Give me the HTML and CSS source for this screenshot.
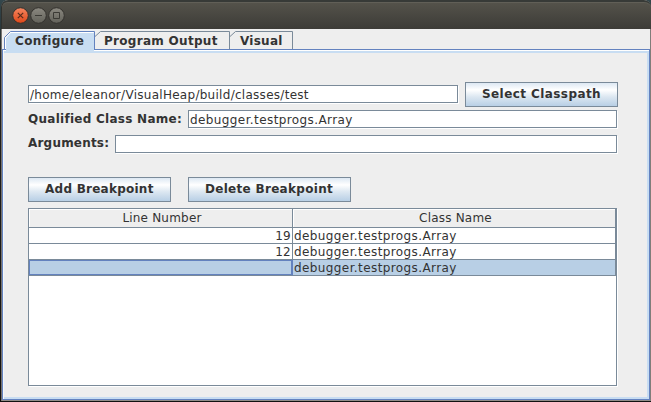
FILE: index.html
```html
<!DOCTYPE html>
<html lang="en">
<head>
<meta charset="utf-8">
<title>VisualHeap</title>
<link rel="stylesheet" href="styles.css">
</head>
<body>
<div class="window">
  <header class="titlebar">
    <svg class="controls" width="60" height="20" viewBox="0 0 60 20">
      <defs>
        <linearGradient id="close" x2="0" y2="1"><stop stop-color="#f58660"/><stop offset="1" stop-color="#df4718"/></linearGradient>
        <linearGradient id="gray" x2="0" y2="1"><stop stop-color="#8b8980"/><stop offset="1" stop-color="#62615a"/></linearGradient>
      </defs>
      <g stroke="#33312d" stroke-width="1">
        <circle cx="10.5" cy="10.5" r="7.8" fill="url(#close)"/>
        <circle cx="28.5" cy="10.5" r="7.8" fill="url(#gray)"/>
        <circle cx="46.5" cy="10.5" r="7.8" fill="url(#gray)"/>
      </g>
      <g fill="none" stroke="#5a2c1c" stroke-width="1.2">
        <path d="M7.800 7.800l5.400 5.400M13.200 7.800l-5.400 5.400"/>
        <path d="M25 10.500h7M43.500 7.500h6v6h-6z" stroke="#3b3a35" stroke-width="1"/>
      </g>
    </svg>
  </header>
  <nav class="tabs">
    <div class="tab selected">
      <svg width="91" height="22"><path class="fill" d="M2 20V6L7 2h83v18z"/><path class="edge" d="M.5 18V6.500L6.500.5h84v18"/><path class="shine" d="M1.500 18V7l5-5.500h83"/></svg>
      <span class="label configure">Configure</span>
    </div>
    <div class="tab output">
      <svg width="135" height="18"><path class="edge" d="M0 5.500L5.500.5h129V18"/></svg>
      <span class="label program">Program Output</span>
    </div>
    <div class="tab visual">
      <svg width="63" height="18"><path class="edge" d="M0 5.500L5.500.5h57V18"/></svg>
      <span class="label vis">Visual</span>
    </div>
  </nav>
  <main class="pane">
    <div class="row path-row">
      <div class="field path"><span class="path-text">/home/eleanor/VisualHeap/build/classes/test</span></div>
      <div class="button select"><span class="select-text">Select Classpath</span></div>
    </div>
    <div class="row class-row">
      <span class="caption qualified">Qualified Class Name:</span>
      <div class="field"><span class="class-text">debugger.testprogs.Array</span></div>
    </div>
    <div class="row args-row">
      <span class="caption arguments">Arguments:</span>
      <div class="field"></div>
    </div>
    <div class="row buttons">
      <div class="button add"><span class="add-text">Add Breakpoint</span></div>
      <div class="button delete"><span class="delete-text">Delete Breakpoint</span></div>
    </div>
    <div class="table">
      <div class="record head"><div class="cell"><span class="head-text">Line Number</span></div><div class="cell"><span class="head-text">Class Name</span></div></div>
      <div class="record"><div class="cell number">19</div><div class="cell"><span class="class-text">debugger.testprogs.Array</span></div></div>
      <div class="record"><div class="cell number">12</div><div class="cell"><span class="class-text">debugger.testprogs.Array</span></div></div>
      <div class="record active"><div class="cell number focus"></div><div class="cell"><span class="class-text">debugger.testprogs.Array</span></div></div>
    </div>
  </main>
</div>
</body>
</html>
```
FILE: styles.css
```css
* { box-sizing: border-box; }
body {
  margin: 0;
  width: 651px;
  height: 402px;
  overflow: hidden;
  background: linear-gradient(#34474c, #29363a 30px, #222 60px, #111);
  font: 12px/15px "DejaVu Sans", sans-serif;
  color: #333;
}
.window {
  width: 650px;
  height: 401px;
  margin-left: 1px;
  border-right: 1px solid #807d7a;
  border-bottom: 1px solid #918d89;
  border-left: 1px solid #77736f;
  border-radius: 7px 7px 0 0;
  background: #eee;
}
.titlebar {
  height: 29px;
  margin: 0 -1px;
  padding: 5px 0 0 9px;
  border-top: 2px solid #373a37;
  border-left: 1px solid #30312e;
  border-radius: 7px 7px 0 0;
  background: linear-gradient(#55534b, #3c3b37);
  box-shadow: inset 0 1px #615f57;
}
.controls { display: block; margin: -2px 0 0 -1px; }
.tabs {
  display: flex;
  height: 20px;
  padding: 2px 0 0 2px;
}
.tab { position: relative; height: 18px; }
.tab svg { display: block; overflow: visible; }
.selected { width: 91px; z-index: 1; }
.output { width: 135px; }
.visual { width: 63px; }
.edge { fill: none; stroke: #7a8a99; }
.selected .edge { stroke: #6382bf; }
.shine { fill: none; stroke: #fff; }
.fill { fill: #c8ddf2; }
.label {
  position: absolute;
  top: 3px;
  font-weight: bold;
  white-space: nowrap;
}
.configure { left: 11px; letter-spacing: .35px; }
.program { left: 9px; letter-spacing: .29px; }
.vis { left: 10px; letter-spacing: .25px; }
.pane {
  height: 351px;
  padding: 32px 29px 0 23px;
  border: 1px solid #6382bf;
  box-shadow: inset 0 1px #fff, inset 1px 0 #f4f8fc, inset -2px -2px #c8ddf2, inset 0 3px #c8ddf2;
}
.row { display: flex; align-items: flex-start; width: 591px; padding-left: 2px; }
.path-row { height: 28px; }
.class-row { height: 25px; }
.args-row { height: 42px; }
.buttons { gap: 17px; height: 31px; }
.field {
  flex: 1;
  height: 18px;
  padding-left: 1px;
  border: 1px solid #7a8a99;
  background: #fff;
  box-shadow: 1px 1px #fff;
  line-height: 19px;
  white-space: nowrap;
}
.path { flex: none; width: 430px; margin: 3px 7px 0 0; }
.path-text { letter-spacing: .28px; }
.class-text { letter-spacing: .4px; }
.head-text { letter-spacing: .2px; padding-left: 2px; }
.caption { font-weight: bold; line-height: 18px; white-space: nowrap; }
.qualified { width: 160px; letter-spacing: .27px; }
.arguments { width: 87px; margin-top: -1px; letter-spacing: .2px; }
.button {
  flex: none;
  height: 25px;
  padding-left: 16px;
  border: 1px solid #7a8a99;
  background: linear-gradient(#dde8f3, #fff 30%, #dce7f1 60%, #b8cfe5);
  font-weight: bold;
  line-height: 23px;
  white-space: nowrap;
}
.select { width: 153px; letter-spacing: .42px; }
.add { width: 143px; letter-spacing: .25px; }
.delete { width: 163px; letter-spacing: .3px; }
.table {
  width: 589px;
  height: 178px;
  margin-left: 2px;
  border: 1px solid #7a8a99;
  background: #fff;
  box-shadow: 1px 1px #fff;
}
.record {
  display: grid;
  grid-template-columns: 264px 323px;
  grid-template-rows: 100%;
  height: 16px;
  line-height: 17px;
}
.cell {
  padding-left: 1px;
  border-right: 1px solid #7a8a99;
  border-bottom: 1px solid #7a8a99;
  white-space: nowrap;
}
.number { padding: 0 1px 0 0; text-align: right; letter-spacing: .3px; }
.head { height: 19px; line-height: 19px; text-align: center; background: #eee; }
.head .cell { box-shadow: inset 1px 1px #fff; }
.active { background: #b8cfe5; }
.focus { border-right: 1px solid #6382bf; box-shadow: inset 0 0 0 1px #6382bf; }
```
